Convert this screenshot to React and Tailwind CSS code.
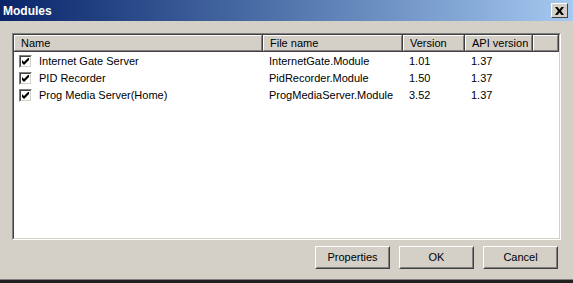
const columns = [
  { label: "Name", width: "w-[249px]" },
  { label: "File name", width: "w-[140px]" },
  { label: "Version", width: "w-[62px]" },
  { label: "API version", width: "w-[68px]" },
];

const modules = [
  { name: "Internet Gate Server", file: "InternetGate.Module", version: "1.01", api: "1.37" },
  { name: "PID Recorder", file: "PidRecorder.Module", version: "1.50", api: "1.37" },
  { name: "Prog Media Server(Home)", file: "ProgMediaServer.Module", version: "3.52", api: "1.37" },
];

function CheckBox() {
  return (
    <span className="flex h-[13px] w-[13px] shrink-0 items-center justify-center border border-t-[#808080] border-l-[#808080] border-b-white border-r-white">
      <span className="flex h-[11px] w-[11px] items-center justify-center border border-t-[#404040] border-l-[#404040] border-b-[#d4d0c8] border-r-[#d4d0c8] bg-white">
        <svg width="7" height="7" viewBox="0 0 7 7">
          <path d="M0 2 L2 4 L7 -1 L7 2 L2 7 L0 5 Z" fill="#000" />
        </svg>
      </span>
    </span>
  );
}

function HeaderCell({ label, width }) {
  return (
    <div className={`${width} h-[17px] shrink-0 border-r border-b border-r-[#404040] border-b-[#404040]`}>
      <div className="flex h-full items-center border-t border-l border-r border-b border-t-white border-l-white border-r-[#808080] border-b-[#808080] bg-[#d4d0c8] pl-[6px]">
        {label}
      </div>
    </div>
  );
}

function Button({ children }) {
  return (
    <button className="h-[23px] w-[75px] border border-t-white border-l-white border-r-[#404040] border-b-[#404040] bg-[#d4d0c8]">
      <span className="flex h-full w-full items-center justify-center border border-t-[#d4d0c8] border-l-[#d4d0c8] border-r-[#808080] border-b-[#808080]">
        {children}
      </span>
    </button>
  );
}

export default function App() {
  return (
    <div
      className="flex h-[283px] w-[573px] flex-col bg-[#d4d0c8] text-[11px] text-black"
      style={{ fontFamily: '"Liberation Sans", Arial, sans-serif' }}
    >
      <div className="flex h-[21px] shrink-0 items-center justify-between bg-gradient-to-r from-[#0a246a] to-[#a6caf0] pl-[3px] pr-[5px]">
        <span className="text-[12px] font-bold text-white">Modules</span>
        <button className="flex h-[15px] w-[17px] items-center justify-center border border-t-white border-l-white border-r-[#404040] border-b-[#404040] bg-[#d4d0c8]">
          <svg width="9" height="8" viewBox="0 0 9 8">
            <path d="M0 0h2.5l2 2.5 2-2.5H9L6 4l3 4H6.5l-2-2.5-2 2.5H0l3-4z" fill="#000" />
          </svg>
        </button>
      </div>

      <div className="flex flex-1 flex-col px-[12px] pt-[12px]">
        <div className="h-[207px] border border-t-[#808080] border-l-[#808080] border-b-white border-r-white">
          <div className="h-full border border-t-[#404040] border-l-[#404040] border-b-[#d4d0c8] border-r-[#d4d0c8] bg-white">
            <div className="flex">
              {columns.map((col) => (
                <HeaderCell key={col.label} label={col.label} width={col.width} />
              ))}
              <HeaderCell label="" width="flex-1" />
            </div>
            <div className="pt-[1px]">
              {modules.map((m) => (
                <div key={m.name} className="flex h-[17px] items-center">
                  <div className="flex w-[249px] items-center gap-[7px] pl-[5px]">
                    <CheckBox />
                    <span>{m.name}</span>
                  </div>
                  <div className="w-[140px] pl-[6px]">{m.file}</div>
                  <div className="w-[62px] pl-[6px]">{m.version}</div>
                  <div className="w-[68px] pl-[6px]">{m.api}</div>
                </div>
              ))}
            </div>
          </div>
        </div>

        <div className="mt-[6px] flex justify-end gap-[9px] pr-[3px]">
          <Button>Properties</Button>
          <Button>OK</Button>
          <Button>Cancel</Button>
        </div>
      </div>
      <div className="h-[1px] shrink-0 bg-[#808080]" />
      <div className="h-[3px] shrink-0 bg-[#202020]" />
    </div>
  );
}
